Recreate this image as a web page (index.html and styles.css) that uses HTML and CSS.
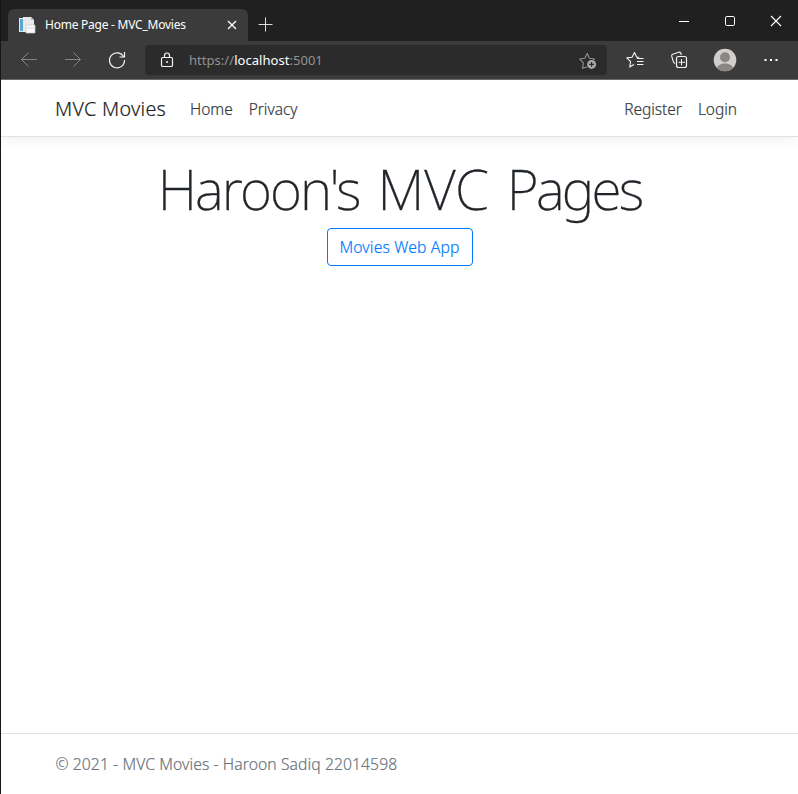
FILE: index.html
```html
<!DOCTYPE html>
<html lang="en">
<head>
<meta charset="utf-8">
<title>Home Page - MVC_Movies</title>
<link rel="stylesheet" href="styles.css">
</head>
<body>
<div class="window">
  <div class="titlebar">
    <div class="tab">
      <svg class="favicon" width="17" height="17" viewBox="0 0 17 17"><path d="M0 1h6v14H0z" fill="#d9eaf5"/><path d="M1 2h3v12H1z" fill="#5ba5d3"/><path d="M4 0h8l3 3v12H4z" fill="#e9eaec"/><path d="M12 0v3h3" fill="#b9bdc3"/><path d="M7 8h9v8H7z" fill="#fafafa" stroke="#c5c8cd" stroke-width=".7"/><path d="M8 11h7" stroke="#cfd4da"/></svg>
      <span class="tab-title">Home Page - MVC_Movies</span>
      <svg class="tab-close" width="10" height="10" viewBox="0 0 10 10"><path d="M1 1l8 8M9 1l-8 8" stroke="#fff" stroke-width="1.3"/></svg>
    </div>
    <svg class="new-tab" width="15" height="15" viewBox="0 0 15 15"><path d="M7.5 .5v14M.5 7.5h14" stroke="#ddd"/></svg>
    <div class="controls">
      <svg width="46" height="41" viewBox="0 0 46 41"><path d="M18 21.5h10" stroke="#fff"/></svg>
      <svg width="46" height="41" viewBox="0 0 46 41"><rect x="18.5" y="16.5" width="9" height="9" rx="1.3" fill="none" stroke="#fff"/></svg>
      <svg width="46" height="41" viewBox="0 0 46 41"><path d="M18 16l10 10M28 16L18 26" stroke="#fff" stroke-width="1.2"/></svg>
    </div>
  </div>
  <div class="toolbar">
    <svg width="44" height="38" viewBox="0 0 44 38"><path d="M36 18.5H20.500M27.500 11.500l-7 7 7 7" fill="none" stroke="#848484"/></svg>
    <svg width="44" height="38" viewBox="0 0 44 38"><path d="M20 18.500h15.500M28.500 11.500l7 7-7 7" fill="none" stroke="#848484"/></svg>
    <svg width="44" height="38" viewBox="0 0 44 38"><path d="M34.700 16A7.500 7.500 0 1 0 35.500 19M35.500 11v5h-5" fill="none" stroke="#f4f4f4" stroke-width="1.200"/></svg>
    <div class="address">
      <svg class="lock" width="14" height="17" viewBox="0 0 14 17"><rect x="1.500" y="5.500" width="11" height="9" rx="1.300" fill="none" stroke="#f4f4f4" stroke-width="1.200"/><path d="M4.500 5.500V3.500a2.500 2.500 0 0 1 5 0v2" fill="none" stroke="#f4f4f4" stroke-width="1.200"/><circle cx="7" cy="10" r="1" fill="#f4f4f4"/></svg>
      <span class="url">https://<b>localhost</b>:5001</span>
      <svg class="star" width="19" height="18" viewBox="0 0 19 18"><path d="M8 16l-4.500 1.300.9-5.500L.8 8l5-.7L8.200 2.500l2.300 4.800 5 .7-1 1" fill="none" stroke="#929292" stroke-width="1.100" stroke-linejoin="round"/><circle cx="12.600" cy="13.400" r="4.500" fill="#a9a9a9"/><path d="M12.600 11v4.800M10.200 13.400H15" stroke="#2b2b2b" stroke-width="1.200"/></svg>
    </div>
    <svg class="tool favorites" width="44" height="38" viewBox="0 0 44 38"><path d="M18 23l-4.300 2.500.9-5.400-3.800-3.700 5.200-.7 2.500-4.700 2.200 4.700h2.500" transform="translate(3 .5)" fill="none" stroke="#f4f4f4" stroke-width="1.100" stroke-linejoin="round"/><path d="M24 17.500h6.500M24 20.500h6.500M24 23.500h6.500" stroke="#f4f4f4"/></svg>
    <svg class="tool collections" width="44" height="38" viewBox="0 0 44 38"><path d="M17 22.500c-1.500-.5-1.600-1.500-2-3l-1.300-4.300q-.4-1.500 1-2l6-2q1.500-.4 2 .8l.7 2" fill="none" stroke="#f4f4f4" stroke-width="1.100"/><rect x="18.500" y="15.500" width="10" height="11" rx="2" fill="none" stroke="#f4f4f4" stroke-width="1.200"/><path d="M23.500 18v6.500M20.500 21.300h6.500" stroke="#f4f4f4"/></svg>
    <svg class="tool avatar" width="46" height="38" viewBox="0 0 46 38"><circle cx="23" cy="19" r="11.300" fill="#d1cfcc"/><circle cx="23" cy="16.300" r="5" fill="#898684"/><path d="M15 27a11.300 11.300 0 0 0 16 0c-1.500-6-14.500-6-16 0z" fill="#898684"/></svg>
    <svg class="tool" width="44" height="38" viewBox="0 0 44 38"><path d="M15.500 18h2v2h-2zM21 18h2v2h-2zM26.500 18h2v2h-2z" fill="#fff"/></svg>
  </div>
  <header class="navbar">
    <a class="brand">MVC Movies</a>
    <a class="link home">Home</a>
    <a class="link privacy">Privacy</a>
    <a class="link register">Register</a>
    <a class="link login">Login</a>
  </header>
  <main>
    <h1><span class="owner">Haroon's</span> MVC <span class="pages">Pages</span></h1>
    <a class="button"><span>Movies Web App</span></a>
  </main>
  <footer>© 2021 - MVC Movies - Haroon Sadiq 22014598</footer>
</div>
</body>
</html>
```
FILE: styles.css
```css
* { box-sizing: border-box; }
body { margin: 0; background: #fff; font-family: "Noto Sans", "Open Sans", sans-serif; }
svg { display: block; flex: none; }
.window { display: flex; flex-direction: column; width: 798px; height: 794px; border-left: 1px solid #161616; overflow: hidden; white-space: nowrap; }
.titlebar { display: flex; align-items: flex-start; height: 41px; flex: none; background: #202020; }
.tab { display: flex; align-items: center; width: 240px; height: 32px; margin: 9px 0 0 7px; padding-left: 11px; background: #3b3b3b; border-radius: 6px 6px 0 0; }
.tab-title { width: 181.500px; margin-left: 9px; color: #fff; font-size: 12px; line-height: 16px; margin-top: -1px; letter-spacing: -.24px; }
.new-tab { margin: 17px 0 0 10px; }
.controls { display: flex; margin-left: auto; margin-right: -1px; }
.toolbar { display: flex; align-items: center; height: 39px; flex: none; background: #3b3b3b; border-bottom: 1px solid #6b6b6b; }
.address { display: flex; align-items: center; width: 462px; height: 30px; margin-left: 12px; background: #2b2b2b; border-radius: 4px; }
.lock { margin-left: 15px; }
.url { margin-left: 15px; color: #929292; font-size: 13px; letter-spacing: .04px; }
.url b { color: #fff; font-weight: 400; }
.star { margin-left: auto; margin-right: 9px; }
.favorites { margin-left: 6px; }
.collections { margin-left: 1px; }
.avatar { margin-right: 1px; }
.navbar { display: flex; align-items: center; height: 57px; flex: none; padding: 1px 61px 0 54px; border-bottom: 1px solid #dee2e6; box-shadow: 0 4px 12px rgba(0,0,0,.05); }
.brand { width: 135px; color: #1b1e21; font-size: 19.7px; font-weight: 300; letter-spacing: .3px; -webkit-text-stroke: .2px; }
.link { color: #343a40; font-size: 15.5px; font-weight: 300; letter-spacing: -.03px; -webkit-text-stroke: .2px; }
.privacy { margin-left: 16px; }
.register { margin-left: auto; }
.login { margin-left: 16px; }
main { display: flex; flex-direction: column; align-items: center; flex: 1; padding-top: 18px; }
h1 { margin: 0 0 6px; color: #212529; font-size: 55px; line-height: 67px; font-weight: 200; word-spacing: 3.500px; -webkit-text-stroke: .3px; }
.owner { letter-spacing: -1.900px; }
.pages { letter-spacing: -2.800px; }
.button { display: flex; align-items: center; justify-content: center; width: 146px; height: 38px; border: 1px solid #007bff; border-radius: 4px; color: #007bff; font-size: 15.7px; font-weight: 300; letter-spacing: .15px; -webkit-text-stroke: .2px; }
footer { height: 61px; flex: none; padding-left: 54.500px; border-top: 1px solid #dee2e6; color: #6c757d; font-size: 15.7px; line-height: 61px; font-weight: 300; letter-spacing: .08px; -webkit-text-stroke: .2px; }
```
